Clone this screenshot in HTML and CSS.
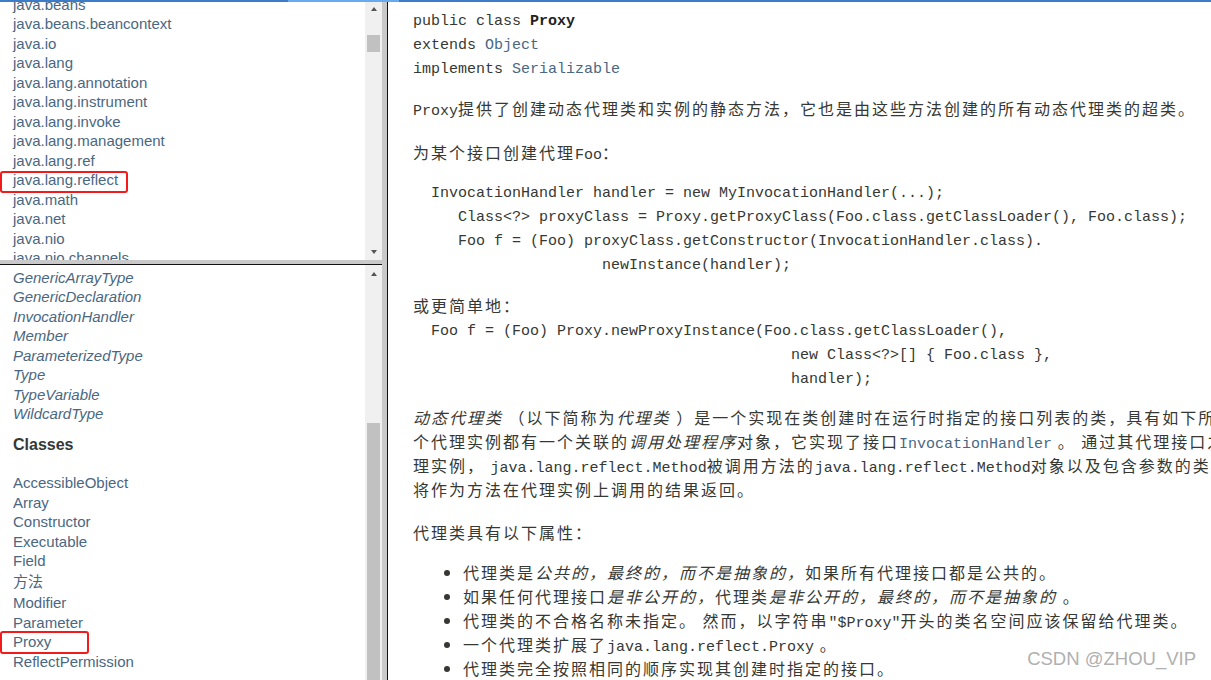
FILE: index.html
```html
<!DOCTYPE html>
<html lang="zh-CN">
<head>
<meta charset="utf-8">
<title>Proxy</title>
<link rel="stylesheet" href="styles.css">
</head>
<body>
<div class="page">
  <nav class="nav">
    <div class="frame frame-top">
      <div class="frame-content">
        <ul class="pkg-list">
          <li>java.beans</li>
          <li>java.beans.beancontext</li>
          <li>java.io</li>
          <li>java.lang</li>
          <li>java.lang.annotation</li>
          <li>java.lang.instrument</li>
          <li>java.lang.invoke</li>
          <li>java.lang.management</li>
          <li>java.lang.ref</li>
          <li class="mark mark-pkg">java.lang.reflect</li>
          <li>java.math</li>
          <li>java.net</li>
          <li>java.nio</li>
          <li>java.nio.channels</li>
          <li>java.nio.channels.spi</li>
        </ul>
      </div>
      <div class="sb">
        <div class="sb-btn sb-up"></div>
        <div class="sb-track"><div class="sb-thumb thumb-top"></div></div>
        <div class="sb-btn sb-down"></div>
      </div>
    </div>
    <div class="hsplit"></div>
    <div class="frame frame-bottom">
      <div class="frame-content">
        <ul class="type-list iface-list">
          <li>GenericArrayType</li>
          <li>GenericDeclaration</li>
          <li>InvocationHandler</li>
          <li>Member</li>
          <li>ParameterizedType</li>
          <li>Type</li>
          <li>TypeVariable</li>
          <li>WildcardType</li>
        </ul>
        <h2 class="list-title">Classes</h2>
        <ul class="type-list class-list">
          <li>AccessibleObject</li>
          <li>Array</li>
          <li>Constructor</li>
          <li>Executable</li>
          <li>Field</li>
          <li class="cjk-item">方法</li>
          <li>Modifier</li>
          <li>Parameter</li>
          <li class="mark mark-cls">Proxy</li>
          <li>ReflectPermission</li>
        </ul>
      </div>
      <div class="sb">
        <div class="sb-btn sb-up"></div>
        <div class="sb-track"><div class="sb-thumb thumb-bottom"></div></div>
      </div>
    </div>
  </nav>
  <div class="vsplit"></div>
  <main class="content">
    <div class="sig">
      <div>public class <b>Proxy</b></div>
      <div>extends <span class="link">Object</span></div>
      <div>implements <span class="link">Serializable</span></div>
    </div>
    <p class="zh p-intro"><code>Proxy</code>提供了创建动态代理类和实例的静态方法，它也是由这些方法创建的所有动态代理类的超类。</p>
    <p class="zh p-foo">为某个接口创建代理<code>Foo</code>：</p>
<pre class="code code-1">  InvocationHandler handler = new MyInvocationHandler(...);
     Class&lt;?&gt; proxyClass = Proxy.getProxyClass(Foo.class.getClassLoader(), Foo.class);
     Foo f = (Foo) proxyClass.getConstructor(InvocationHandler.class).
                     newInstance(handler);</pre>
    <p class="zh p-simple">或更简单地：</p>
<pre class="code code-2">  Foo f = (Foo) Proxy.newProxyInstance(Foo.class.getClassLoader(),
                                          new Class&lt;?&gt;[] { Foo.class },
                                          handler);</pre>
    <p class="zh p-long"><em>动态代理类</em> （以下简称为<em>代理类</em> ）是一个实现在类创建时在运行时指定的接口列表的类，具有如下所述的行为。<br>个代理实例都有一个关联的<em>调用处理程序</em>对象，它实现了接口<code class="link">InvocationHandler</code> 。 通过其代理接口之一的代理实例上的方法调用将被分派到实例调用处理程序的方法<br>理实例， <code>java.lang.reflect.Method</code>被调用方法的<code>java.lang.reflect.Method</code>对象以及包含参数的类型<code>Object</code>的数组。<br>将作为方法在代理实例上调用的结果返回。</p>
    <p class="zh p-props">代理类具有以下属性：</p>
    <ul class="zh props">
      <li>代理类是<em>公共的，最终的，而不是抽象的，</em>如果所有代理接口都是公共的。</li>
      <li>如果任何代理接口<em>是非公开的，</em>代理类<em>是非公开的，最终的，而不是抽象的</em> 。</li>
      <li>代理类的不合格名称未指定。 然而，以字符串<code>"$Proxy"</code>开头的类名空间应该保留给代理类。</li>
      <li>一个代理类扩展了<code>java.lang.reflect.Proxy</code> 。</li>
      <li>代理类完全按照相同的顺序实现其创建时指定的接口。</li>
    </ul>
  </main>
</div>
<div class="topbar"><span class="seg seg-a"></span><span class="seg seg-b"></span><span class="seg seg-c"></span></div>
<div class="watermark">CSDN @ZHOU_VIP</div>
</body>
</html>
```

FILE: styles.css
```css
html, body {
  margin: 0;
  padding: 0;
  background: #fff;
}

body {
  width: 1211px;
  height: 680px;
  overflow: hidden;
  position: relative;
  font-family: "Liberation Sans", Arial, "Noto Sans CJK SC", sans-serif;
}

.page {
  display: flex;
  height: 680px;
  overflow: hidden;
}

/* ---------- left navigation frames ---------- */
.nav {
  width: 382px;
  flex: 0 0 382px;
  display: flex;
  flex-direction: column;
}

.frame {
  display: flex;
  overflow: hidden;
}

.frame-top {
  height: 260px;
  flex: 0 0 260px;
}

.frame-bottom {
  flex: 1;
}

.frame-content {
  flex: 1;
  overflow: hidden;
  background: #fff;
}

.hsplit {
  height: 4px;
  flex: 0 0 4px;
  background: #c9c9c9;
  border-bottom: 1px solid #111;
}

.vsplit {
  width: 5px;
  flex: 0 0 5px;
  background: #c9c9c9;
  border-right: 1px solid #111;
}

.pkg-list,
.type-list {
  list-style: none;
  margin: 0;
  padding: 0;
  font-size: 15px;
  color: #4a6782;
}

.pkg-list li,
.type-list li {
  line-height: 19.5px;
  padding-left: 13px;
  white-space: nowrap;
}

.pkg-list {
  margin-top: -5.5px;
}

.iface-list {
  padding-top: 2.5px;
}

.iface-list li {
  font-style: italic;
}

.type-list li.cjk-item {
  line-height: 22.5px;
}

.list-title {
  margin: 11.5px 0 0 0;
  padding-left: 13px;
  font-size: 16px;
  line-height: 20px;
  font-weight: bold;
  color: #353833;
}

.class-list {
  margin-top: 18px;
}

.mark {
  position: relative;
}

.mark::after {
  content: "";
  position: absolute;
  left: 0;
  top: 1px;
  height: 22px;
  box-sizing: border-box;
  border: 2px solid #f21b1b;
  border-radius: 3px;
}

.mark-pkg::after {
  width: 128px;
}

.mark-cls::after {
  top: -1px;
  height: 23px;
  width: 89px;
}

/* fake scrollbars */
.sb {
  width: 17px;
  flex: 0 0 17px;
  background: #f0f0f0;
  display: flex;
  flex-direction: column;
}

.sb-btn {
  height: 17px;
  flex: 0 0 17px;
  display: flex;
  align-items: center;
  justify-content: center;
}

.sb-btn::before {
  content: "";
  width: 0;
  height: 0;
  border-left: 3.5px solid transparent;
  border-right: 3.5px solid transparent;
}

.sb-up::before {
  border-bottom: 4px solid #555;
}

.sb-down::before {
  border-top: 4px solid #555;
}

.sb-track {
  flex: 1;
  overflow: hidden;
}

.sb-thumb {
  margin: 0 2px;
  background: #c1c1c1;
}

.thumb-top {
  margin-top: 18px;
  height: 17px;
}

.thumb-bottom {
  margin-top: 141px;
  height: 400px;
}

/* ---------- right content frame ---------- */
.content {
  flex: 1;
  overflow: hidden;
  padding: 10px 0 0 25px;
  color: #353833;
  white-space: nowrap;
}

.sig {
  font-family: "Liberation Mono", monospace;
  font-size: 15px;
  line-height: 24px;
}

.sig b {
  font-weight: bold;
  color: #222;
}

.link {
  color: #4a6782;
}

.zh {
  font-family: "Noto Sans CJK SC", "Liberation Sans", sans-serif;
  font-size: 16px;
  letter-spacing: 2px;
  line-height: 24px;
  margin: 0;
}

.zh em {
  font-style: italic;
}

.zh code {
  font-family: "Liberation Mono", monospace;
  font-size: 15px;
  letter-spacing: 0;
  line-height: 1;
}

.code {
  font-family: "Liberation Mono", monospace;
  font-size: 15px;
  letter-spacing: 0;
  margin: 0;
  line-height: 24px;
  color: #353833;
}

.p-intro { margin-top: 14px; }
.p-foo { margin-top: 20px; }
.code-1 { margin-top: 18px; }
.p-simple { margin-top: 15px; }
.code-2 { margin-top: 3px; }
.p-long { margin-top: 13px; }
.p-props { margin-top: 19px; }

.props {
  margin: 16px 0 0 0;
  padding-left: 50px;
  list-style: disc;
}

.props li {
  line-height: 24px;
}

/* ---------- overlays ---------- */
.topbar {
  position: absolute;
  left: 0;
  top: 0;
  width: 1211px;
  height: 2px;
  display: flex;
}

.seg { height: 2px; display: block; }
.seg-a { width: 288px; background: #3d7cc9; }
.seg-b { width: 111px; background: #66aaf0; }
.seg-c { flex: 1; background: #3d7cc9; }

.watermark {
  position: absolute;
  right: 15px;
  top: 648px;
  font-family: "Liberation Sans", Arial, sans-serif;
  font-size: 18.5px;
  line-height: 22px;
  color: #b0b0b0;
  text-shadow: 0 0 2px #fff, 0 0 1px #fff;
}
```
